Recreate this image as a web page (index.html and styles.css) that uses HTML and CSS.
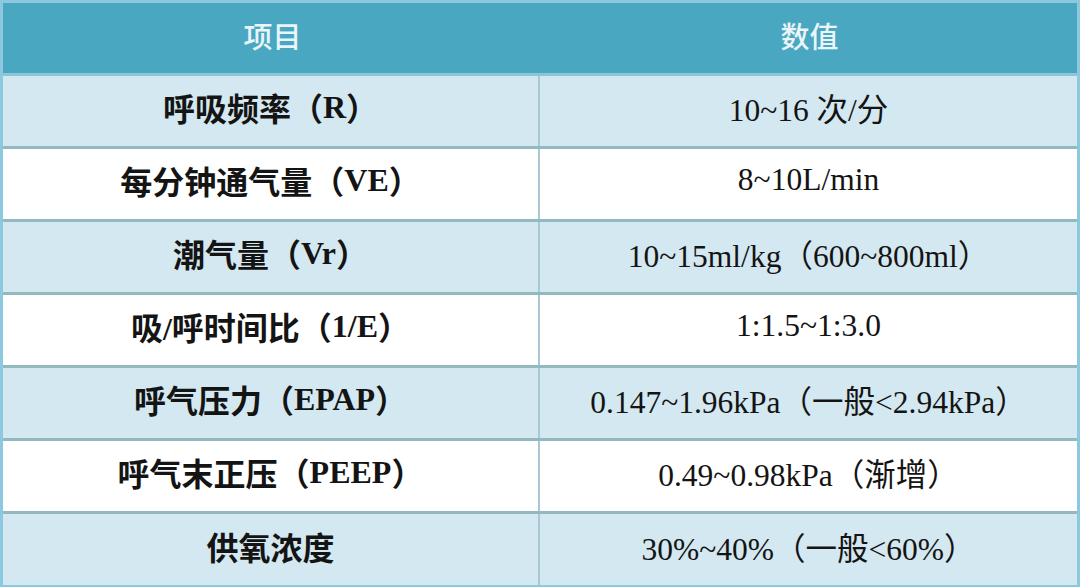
FILE: index.html
```html
<!DOCTYPE html>
<html lang="zh-CN">
<head>
<meta charset="utf-8">
<link rel="stylesheet" href="styles.css">
</head>
<body>
<div class="table">
  <div class="row head">
    <div class="cell c1">项目</div>
    <div class="cell c2">数值</div>
  </div>
  <div class="row blue">
    <div class="cell c1">呼吸频率（<b>R</b>）</div>
    <div class="cell c2">10~16 次/分</div>
  </div>
  <div class="row white">
    <div class="cell c1">每分钟通气量（<b>VE</b>）</div>
    <div class="cell c2">8~10L/min</div>
  </div>
  <div class="row blue">
    <div class="cell c1">潮气量（<b>Vr</b>）</div>
    <div class="cell c2">10~15ml/kg（600~800ml）</div>
  </div>
  <div class="row white">
    <div class="cell c1">吸/呼时间比（<b>1/E</b>）</div>
    <div class="cell c2">1:1.5~1:3.0</div>
  </div>
  <div class="row blue">
    <div class="cell c1">呼气压力（<b>EPAP</b>）</div>
    <div class="cell c2">0.147~1.96kPa（一般&lt;2.94kPa）</div>
  </div>
  <div class="row white">
    <div class="cell c1">呼气末正压（<b>PEEP</b>）</div>
    <div class="cell c2">0.49~0.98kPa（渐增）</div>
  </div>
  <div class="row blue last">
    <div class="cell c1">供氧浓度</div>
    <div class="cell c2">30%~40%（一般&lt;60%）</div>
  </div>
</div>
</body>
</html>
```

FILE: styles.css
```css
html, body {
  margin: 0;
  padding: 0;
  background: #ffffff;
}
.table {
  width: 1080px;
  height: 587px;
  box-sizing: border-box;
  border: 3px solid #8cc8de;
  display: flex;
  flex-direction: column;
  font-family: "Liberation Serif", "Noto Sans CJK SC", serif;
  color: #141414;
}
.row {
  display: flex;
  height: 70px;
  border-bottom: 3px solid #92b8c0;
  flex: none;
}
.row.last {
  border-bottom: none;
  height: 71px;
}
.cell {
  display: flex;
  align-items: center;
  justify-content: center;
  font-size: 31.5px;
  padding-bottom: 8px;
  box-sizing: border-box;
  white-space: pre;
}
.c1 {
  width: 537px;
  font-size: 32px;
  font-weight: 600;
  border-right: 2px solid #a8c9d4;
}
.c2 {
  flex: 1;
}
.head {
  background: #4aa7c1;
  border-bottom-color: #8bc6d6;
}
.head .cell {
  color: #e9f5f8;
  font-family: "Noto Sans CJK SC", sans-serif;
  font-weight: 500;
  font-size: 29px;
  border-right: none;
  padding-bottom: 6px;
}
.head .c1 {
  width: 539px;
}
.blue {
  background: #d3e8f0;
}
.white {
  background: #ffffff;
}
.c1 b {
  font-family: "Liberation Serif", serif;
  font-weight: 700;
}
```
